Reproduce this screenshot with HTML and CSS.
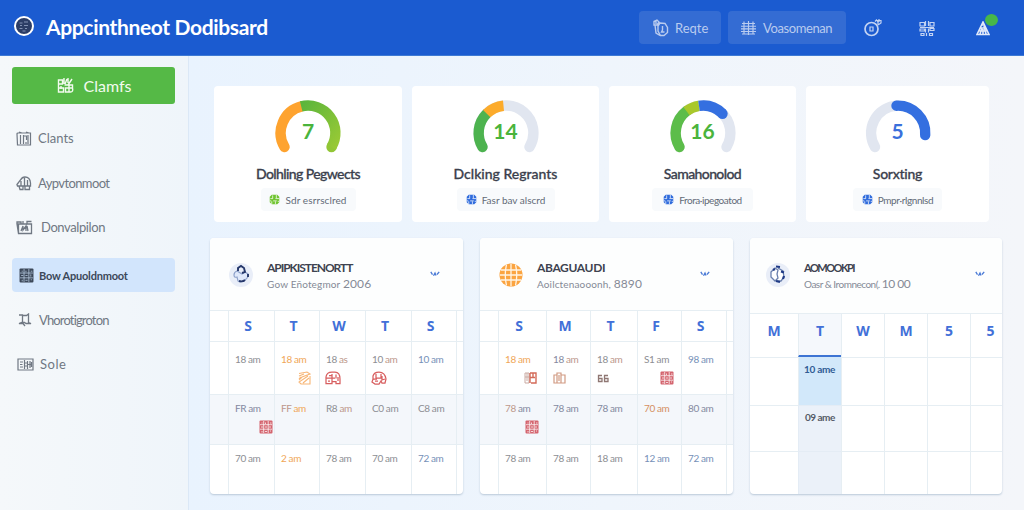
FILE: index.html
```html
<!DOCTYPE html>
<html lang="en">
<head>
<meta charset="utf-8">
<title>Appointment Dashboard</title>
<link rel="stylesheet" href="styles.css">
</head>
<body>
<svg class="defs" aria-hidden="true">
  <symbol id="block" viewBox="0 0 14 14"><rect x=".5" y=".5" width="13" height="13" rx="1" fill="currentColor"/><path d="M4.7 1v12M9.2 1v12M1 4.7h12M1 9.2h12M2.5 3h1M6.5 2.5v1.5M11 3h1.5M2 7h2M6 7h2M11 6v2M3 11v1.500M6 11.500h2M11 11h1" stroke="var(--hole,#fff)" stroke-width=".75" fill="none"/></symbol>
  <symbol id="bus" viewBox="0 0 16 14"><path d="M1 12.500V6Q1.500 1 7 1h3q5 0 5 7v4.500h-4v-2H7v2ZM1 7h9M4 4.500h3M7 3v7M11 3.500v4M13 6v4M3 10h2" stroke="currentColor" fill="none" stroke-width="1.250"/></symbol>
  <symbol id="dome" viewBox="0 0 16 14"><path d="M2 9V5Q3 1 8 1q6 0 7 7l-1 4h-3l-1-2-2 3H4L1 11l1-3h4M5 3v4h5V3M11 5v4l3-1M4 10h3" stroke="currentColor" fill="none" stroke-width="1.250"/></symbol>
  <symbol id="disc" viewBox="0 0 12 12"><path d="M3 .8h6l2.200 2.200v6L9 11.200H3L.8 9V3Z" fill="currentColor"/><path d="M4 1.500v3M8 1v3.500M1.500 5h3M7 5h4M4.500 7.500h4M3 8v3M7 8v3M1 7.500h1.500M9.500 8h1.500" stroke="#fff" stroke-width=".8"/></symbol>
  <symbol id="chev" viewBox="0 0 10 6"><path d="M.8.8l1.700 2.800M3.500 4.800l1.500-2.700 1 2.500M7 3.500L9.200.8" fill="none" stroke="#4a7ad6" stroke-width="1.300"/></symbol>
</svg>

<header class="topbar">
  <svg class="logo" viewBox="0 0 22 22"><circle cx="11" cy="11" r="9" fill="#2c3d66" stroke="#fff" stroke-width="2"/><path d="M6.500 8h3M11 7h4M7 10.500h2M11 10.500h4M6.500 13.500h3M12 13.500h2M9.500 16h3" stroke="#8292b4" stroke-width="1"/></svg>
  <h1>Appcinthneot Dodibsard</h1>
  <div class="tools">
    <button class="tool people"><svg width="17" height="18" viewBox="0 0 17 18"><path d="M2 2.500l3-1.500 2 2-2 3H2ZM3 6l1 8 4 2.500M8 4l5 .5 2.500 4v5L12 16.500H8.500L6 12V7ZM10.500 7v4l-1 2h3M4 2v3" fill="none" stroke="currentColor" stroke-width="1.400"/></svg><span>Reqte</span></button>
    <button class="tool views"><svg width="17" height="16" viewBox="0 0 17 16"><path d="M2 3.500h13M1 6.200h15M1 8.800h15M1 11.500h15M2 14h13M4 1.500v13M8.500 1v14M13 1.500v13" stroke="currentColor" stroke-width="1.150"/></svg><span>Voasomenan</span></button>
    <svg class="t1" width="20" height="20" viewBox="0 0 20 20"><circle cx="8.500" cy="11" r="6.500" fill="none" stroke="currentColor" stroke-width="1.700"/><path d="M7 9h3v4H7ZM12 3.500l1.500-1.500 1.500 2v3M14 2.500h4V5l-3 2M16 1v3" fill="none" stroke="currentColor" stroke-width="1.200"/></svg>
    <svg class="t2" width="16" height="18" viewBox="0 0 16 18"><path d="M1 3.500h4.500v3.500H1ZM6.500 2v5M9.500 2v5M11 3.500h4V7h-4ZM1 10h4.500v2H1ZM6.500 9.500v4M9.500 9.500v4M11 9.500h4v2h-4ZM2 14.500h3v2H2ZM7.500 14v3M10.500 14.500h3v2h-3ZM1 8.500h14" fill="none" stroke="currentColor" stroke-width="1.200"/></svg>
    <div class="alert"><svg width="14" height="15" viewBox="0 0 14 15"><path d="M7 1L1 13.500h12ZM6 4h3M4.500 7h5M3.500 10h7M6 6.500L4 13M8 5l2 8M7 8v6" fill="none" stroke="currentColor" stroke-width="1.600"/></svg><i></i></div>
  </div>
</header>

<div class="body">
  <aside>
    <button class="cta"><svg width="17" height="17" viewBox="0 0 17 17"><path d="M1.500 3h4v4h-4ZM1.500 7v8h5v-4h-5M7 1v6M10 2l-2 5M11 1v5M15 2l-4 6M7.500 8h8v3h-7v4h5q3 0 2-4M12 8v7M4 9v3" fill="none" stroke="currentColor" stroke-width="1.400"/></svg><span>Clamfs</span></button>
    <nav>
      <a class="n1"><svg width="16" height="15" viewBox="0 0 16 15"><path d="M1 3q0-1 1-1h12.500v12h-13ZM3 1l3 1M10 1l3 1M4.500 4v9M7.500 4v9M7.500 5h3v4M12 4v9M10 11v2" fill="none" stroke="currentColor" stroke-width="1.200"/></svg><span>Clants</span></a>
      <a class="n2"><svg width="16" height="15" viewBox="0 0 16 15"><path d="M1 8.500L4.500 4Q6 1 9 1q5 0 5.500 6v3h-13ZM5 5v5M8.500 2v8M11.500 4v6M3 10l1 3.500h3V10M9 10v3.500h4.500V10" fill="none" stroke="currentColor" stroke-width="1.300"/></svg><span>Aypvtonmoot</span></a>
      <a class="n3"><svg width="17" height="15" viewBox="0 0 17 15"><path d="M1 4h14.500v9.500h-13ZM1 4V2h4v2M11 4V1.500h4.500M7 1v3M2.500 4v9.500M5 11l2-5v4l3-4v5M11 6l1 5" fill="none" stroke="currentColor" stroke-width="1.300"/></svg><span>Donvalpilon</span></a>
      <a class="n4 active"><svg width="15" height="15" viewBox="0 0 14 14" style="--hole:#b5c8df"><use href="#block"/></svg><span>Bow Apuoldnmoot</span></a>
      <a class="n5"><svg width="14" height="14" viewBox="0 0 14 14"><path d="M1 2h3.500v7L1 10.500h4l2 2.500M4.500 2.500h4L10.500 1v8.500l2.500 1H8L6.500 9.500H4.500" fill="none" stroke="currentColor" stroke-width="1.300"/></svg><span>Vhorotigroton</span></a>
      <a class="n6"><svg width="17" height="13" viewBox="0 0 17 13"><path d="M1 1h15v11H1ZM3 4h3M3 6.500h2.500M3 9h3M7.500 2v9M7.500 5h3M7.500 8h3M10.500 3v8M10.500 6.500h4M13 3v7M14.500 4v5" fill="none" stroke="currentColor" stroke-width="1.200"/></svg><span>Sole</span></a>
    </nav>
  </aside>

  <main>
    <section class="stats">
      <article class="stat s1">
        <div class="gauge green"><svg viewBox="0 0 70 60"><defs><linearGradient id="g1" x1="0" y1="0" x2="1" y2="1"><stop stop-color="#5cb53c"/><stop offset="1" stop-color="#98c935"/></linearGradient></defs><path d="M11.500 49A27.400 27.400 0 0 1 28.500 8.400" stroke="#fea32f" stroke-linecap="round"/><path d="M58.500 49l0 0" stroke="#92c636" stroke-linecap="round"/><path d="M28.200 8.400A27.400 27.400 0 0 1 58.500 49" stroke="url(#g1)"/></svg><b>7</b></div>
        <h2>Dolhling Pegwects</h2>
        <div class="chip"><svg class="ci lime"><use href="#disc"/></svg><span>Sdr esrrsclred</span></div>
      </article>
      <article class="stat s2">
        <div class="gauge green"><svg viewBox="0 0 70 60"><path d="M11.500 49A27.400 27.400 0 1 1 58.500 49" stroke="#e1e6f0" stroke-linecap="round"/><path d="M11.500 49A27.400 27.400 0 0 1 15.700 15.600" stroke="#4db34f" stroke-linecap="round"/><path d="M15.700 15.600A27.400 27.400 0 0 1 32.500 7.700" stroke="#fcab2b"/></svg><b>14</b></div>
        <h2>Dclking Regrants</h2>
        <div class="chip"><svg class="ci blue"><use href="#disc"/></svg><span>Fasr bav alscrd</span></div>
      </article>
      <article class="stat s3">
        <div class="gauge green"><svg viewBox="0 0 70 60"><path d="M11.500 49A27.400 27.400 0 1 1 58.500 49" stroke="#e1e6f0" stroke-linecap="round"/><path d="M11.500 49A27.400 27.400 0 0 1 18.500 13.200" stroke="#5cbd4a" stroke-linecap="round"/><path d="M54.500 15.700l0 0" stroke="#346fe0" stroke-linecap="round"/><path d="M18.500 13.200A27.400 27.400 0 0 1 31 7.900" stroke="#a9c82b"/><path d="M31 7.900A27.400 27.400 0 0 1 54.500 15.700" stroke="#346fe0"/></svg><b>16</b></div>
        <h2>Samahonolod</h2>
        <div class="chip"><svg class="ci blue"><use href="#disc"/></svg><span>Frora·ipegoatod</span></div>
      </article>
      <article class="stat s4">
        <div class="gauge blue"><svg viewBox="0 0 70 60"><path d="M12 49A27.400 27.400 0 0 1 34 7.600" stroke="#e1e6f0" stroke-linecap="round"/><path d="M33.500 7.700A27.400 27.400 0 0 1 62.200 37" stroke="#346fe0" stroke-linecap="round"/></svg><b>5</b></div>
        <h2>Sorxting</h2>
        <div class="chip"><svg class="ci blue"><use href="#disc"/></svg><span>Pmpr·rlgnnlsd</span></div>
      </article>
    </section>

    <section class="calendars">
      <article class="cal c1">
        <div class="cal-head">
          <svg class="avatar" viewBox="0 0 24 24"><circle cx="12" cy="12" r="12" fill="#e9eef8"/><path d="M8 8q-3 1-3 4t3 2l1 4q3 2 7-1t3-6l-3-2-3 2Z" fill="#dfe8fa" stroke="#8fa2cb" stroke-width="1.200"/><path d="M9 8V5l3-2 3 2 1 4-3 1M10 18q4 1 6-1M19 11v3" fill="none" stroke="#26386b" stroke-width="1.900"/></svg>
          <div class="names"><h3>APIPKISTENORTT</h3><p>Gow Eñotegmor <em>2006</em></p></div>
          <svg class="chev"><use href="#chev"/></svg>
        </div>
        <div class="grid">
          <div class="day"></div><div class="day">S</div><div class="day">T</div><div class="day">W</div><div class="day">T</div><div class="day">S</div><div class="day"></div>
          <div></div><div class="gy">18 am</div>
          <div class="or">18 am<svg class="ic i1" viewBox="0 0 14 14"><path d="M2 2.500l8-1.500 3 2-8 3-3 3M13 5v8H4l-2-2 9-6M2 5l5-2M6 12l6-5M2 8l2-2" fill="none" stroke="#f8b676" stroke-width="1.100"/></svg></div>
          <div class="gy">18 <u class="br">as</u><svg class="ic i2 rd"><use href="#bus"/></svg></div>
          <div class="gy">10 <u class="br">am</u><svg class="ic i3 rd"><use href="#dome"/></svg></div>
          <div class="bl">10 am</div><div></div>
          <div class="alt"></div><div class="alt sl">FR am<svg class="ic i4 rs"><use href="#block"/></svg></div><div class="alt br">FF <u class="or">am</u></div><div class="alt gy">R8 <u class="br">am</u></div><div class="alt gy">C0 am</div><div class="alt gy">C8 am</div><div class="alt"></div>
          <div class="last"></div><div class="last gy">70 am</div><div class="last or">2 am</div><div class="last gy">78 am</div><div class="last gy">70 am</div><div class="last bl">72 am</div><div class="last"></div>
        </div>
      </article>

      <article class="cal c2">
        <div class="cal-head">
          <svg class="avatar" viewBox="0 0 24 24"><circle cx="12" cy="12" r="11.500" fill="#fba440"/><path d="M7.500 1.500Q5 12 7.500 22.500M12 1v22M16.500 1.500Q19 12 16.500 22.500M2 7h20M1 12h22M2 17h20" fill="none" stroke="#fff4e4" stroke-width="1.300"/></svg>
          <div class="names"><h3>ABAGUAUDI</h3><p>Aoilctenaooonh, <em>8890</em></p></div>
          <svg class="chev"><use href="#chev"/></svg>
        </div>
        <div class="grid">
          <div class="day"></div><div class="day">S</div><div class="day">M</div><div class="day">T</div><div class="day">F</div><div class="day">S</div><div class="day"></div>
          <div></div>
          <div class="or">18 am<svg class="ic j1" viewBox="0 0 13 12"><path d="M1 1h4v10H1ZM1 5h4M3 1v8" fill="none" stroke="#c9aaa2"/><path d="M6 1h6v10H7M6 1v10M6 5.500h5M9 1v5" fill="none" stroke="#d36a58" stroke-width="1.400"/></svg></div>
          <div class="sl">18 <u class="br">am</u><svg class="ic j2" viewBox="0 0 13 12"><path d="M1 3h3v8H1ZM4 3V1h4v10H4M8 3h4v8H8M6 3v6" fill="none" stroke="#d19a82" stroke-width="1.200"/></svg></div>
          <div class="gy">18 <u class="br">am</u><svg class="ic j3" viewBox="0 0 12 9"><path d="M5 1.500H1.500v6H5V4.500H2M11 1.500H7.500v6H11V4.500H8" fill="none" stroke="#8f7773" stroke-width="1.300"/></svg></div>
          <div class="gy">S1 am<svg class="ic j4 rs"><use href="#block"/></svg></div>
          <div class="bl">98 am</div><div></div>
          <div class="alt"></div><div class="alt br">78 <u class="sl">am</u><svg class="ic j5 rs"><use href="#block"/></svg></div><div class="alt sl">78 am</div><div class="alt sl">78 am</div><div class="alt do">70 am</div><div class="alt sl">80 am</div><div class="alt"></div>
          <div class="last"></div><div class="last gy">78 am</div><div class="last gy">78 am</div><div class="last gy">18 am</div><div class="last bl">12 am</div><div class="last bl">72 am</div><div class="last"></div>
        </div>
      </article>

      <article class="cal c3">
        <div class="cal-head">
          <svg class="avatar" viewBox="0 0 24 24"><circle cx="12" cy="12" r="12" fill="#e9eef8"/><path d="M5 9l4-4 3 2-1 4 1 4-3 3-4-4ZM12 5l5 3 1 6-3 4h-4" fill="#fff" stroke="#6b80ad" stroke-width="1.300"/><path d="M10 3.500l4 .5M15 8.500l3 1M7 7l2-1M18 13l-1 3M10 18l4 1" stroke="#1f3a86" stroke-width="2.200"/></svg>
          <div class="names"><h3>AOMOOKPI</h3><p>Oasr &amp; Iromnecon(. <em>10 00</em></p></div>
          <svg class="chev"><use href="#chev"/></svg>
        </div>
        <div class="grid">
          <div class="day">M</div><div class="day today">T</div><div class="day">W</div><div class="day">M</div><div class="day">5</div><div class="day end">5</div>
          <div></div><div class="pick">10 ame</div><div></div><div></div><div></div><div></div>
          <div></div><div class="tint">09 ame</div><div></div><div></div><div></div><div></div>
          <div></div><div class="tint"></div><div></div><div></div><div></div><div></div>
        </div>
      </article>
    </section>
  </main>
</div>
</body>
</html>
```
FILE: styles.css
```css
*{box-sizing:border-box}
body{margin:0;width:1024px;height:510px;overflow:hidden;font-family:Lato,"Open Sans",sans-serif;background:#f0f5fc}
h1,h2,h3,p{margin:0}
button{border:0;font:inherit;margin:0}
u{text-decoration:none}
.defs{display:none}

.topbar{display:flex;align-items:center;height:56px;padding-left:14px;background:#1b5bd0;border-bottom:1px solid #3e7ad4;color:#fff}
.logo{width:22px;height:22px;margin:0 0 3px -1px}
h1{margin:-2px 0 0 11px;font-size:21px;line-height:28px;font-weight:700;letter-spacing:-.35px;white-space:nowrap}
.tools{display:flex;align-items:center;margin-left:auto;color:#c3d3f3;height:56px}
.tool{display:flex;align-items:center;height:33px;border-radius:4px;background:#346cd3;color:#b9cbef;font-size:13px;padding:0 0 0 13px;gap:6px;white-space:nowrap}
.people{width:82px;margin-right:7px}
.views{width:118px;padding-left:12px;letter-spacing:-.4px}
.t1{margin-left:17px}
.t2{margin-left:36px}
.alert{position:relative;display:flex;margin:2px 34px 0 41px;color:#e2eafa}
.alert i{position:absolute;left:9px;top:-7px;width:13px;height:12px;border-radius:50%;background:#47b749}

.body{display:flex;height:454px}
aside{width:189px;padding:11px 12px;border-right:1px solid #dbe8f6;background:linear-gradient(90deg,#f5f8fa,#eff5fa)}
.cta{display:flex;align-items:center;justify-content:center;gap:10px;width:163px;height:37px;border-radius:3px;background:#55b946;color:#f3fbef;font-size:16px;padding:0 0 1px 1px}
nav{display:flex;flex-direction:column;padding-top:17px}
nav a{display:flex;align-items:center;height:34px;width:163px;padding-left:4px;gap:6px;border-radius:4px;color:#707883;font-size:13px;white-space:nowrap}
.n2{margin-top:11px;letter-spacing:-.6px}
.n3{margin-top:10px;letter-spacing:-.4px}
.n4{margin-top:14px;letter-spacing:-.2px}
.n5{margin-top:11px;letter-spacing:-.85px}
.n6{margin-top:10px;letter-spacing:.5px}
nav .n3{gap:8px}
nav .n5{padding-left:6px;gap:7px}
nav .n6{padding-left:5px}
nav .active{padding-left:7px;gap:5px;background:#d2e5fc;color:#3c4859;font-size:11px;font-weight:700}

main{flex:1;padding:30px 22px 0 21px;background:linear-gradient(90deg,#e9f3fe,#eff5fc 50%,#f4f6fa)}
.stats{display:flex;gap:10px;padding-left:4px}
.stat{display:flex;flex-direction:column;align-items:center;width:187px;height:136px;padding-top:12px;border-radius:4px;background:#fff}
.s1{width:188px}.s4{width:183px}
.gauge{position:relative;width:70px;height:60px}
.gauge svg{display:block;width:70px;height:60px}
.gauge path{fill:none;stroke-width:10.400}
.gauge b{position:absolute;inset:21px 0 auto 0;text-align:center;font:700 21px/24px Lato,sans-serif}
.green b{color:#4ab43c}
.blue b{color:#3a70dc}
h2{margin-top:7px;font-size:14px;line-height:18px;font-weight:500;color:#3b3f4d;white-space:nowrap;letter-spacing:-.6px;-webkit-text-stroke:.3px}
.s2 h2{letter-spacing:0}
.s4 h2{letter-spacing:-.25px}
.chip{display:flex;align-items:center;justify-content:center;gap:5px;width:95px;height:23px;margin-top:5px;border-radius:4px;background:#f8fafc;color:#626a77;font-size:10px;white-space:nowrap}
.s1 .chip{letter-spacing:.1px}
.s2 .chip{width:98px}
.s3 .chip{width:101px;letter-spacing:-.45px}
.s4 .chip{width:89px;letter-spacing:-.4px}
.ci{width:11px;height:11px}
.ci.lime{color:#70c431}.ci.blue{color:#2f6bdc}

.calendars{display:flex;gap:17px;padding-top:16px}
.cal{width:253px;height:256px;border-radius:4px;overflow:hidden;background:#fff;box-shadow:0 1px 2px #b9c8d8}
.c3{width:252px}
.cal-head{display:flex;height:72px;padding:0 23px 0 19px;background:#fdfefe}
.c3 .cal-head{height:75px;padding:0 17px 0 16px}
.avatar{width:24px;height:24px;margin-top:25px}
.names{margin:21px 0 0 14px;flex:1;white-space:nowrap}
h3{font-size:12px;line-height:17px;font-weight:700;color:#3e4350;letter-spacing:-1.05px}
.c2 h3{letter-spacing:-.35px}
.c3 h3{font-size:11px;letter-spacing:-1.5px}
.names p{font-size:10px;line-height:16px;color:#858a96;letter-spacing:.15px}
.c3 .names p{letter-spacing:-.5px}
.names em{font-style:normal;font-size:12px}
.chev{width:10px;height:6px;margin-top:33px}
.grid{display:grid;grid-template-columns:18px 46px 45px 46px 46px 45px 7px;grid-template-rows:31px 53px 50px 50px;font-size:10px;line-height:12px;letter-spacing:-.4px}
.c2 .grid{grid-template-columns:18px 48px 44px 47px 44px 45px 7px}
.c3 .grid{grid-template-columns:48px 43px 43px 43px 43px 32px;grid-template-rows:44px 48px 46px 43px}
.grid>div{position:relative;border-top:1px solid #e6eef3;border-left:1px solid #e6eef3;padding:11px 0 0 6px;white-space:nowrap;overflow:hidden}
.c1 .grid>div:nth-child(7n+1),.c2 .grid>div:nth-child(7n+1),.c3 .grid>div:nth-child(6n+1){border-left:0}
.grid>.alt{background:#f4f7fb;padding-top:7px}
.grid>.last{padding-top:7px}
.grid>.day{display:flex;align-items:center;justify-content:center;padding:0 7px 0 0;color:#4270d8;font:700 14px/16px "Open Sans",sans-serif;letter-spacing:0}
.c3 .grid>.day{padding:0 0 10px}
.c3 .grid>.end{padding-left:8px}
.c3 .grid>.today{background:#f5f8fc;border-bottom:2px solid #3d74d3;padding-bottom:8px}
.c3 .grid>.pick{background:#d2e8fa;border-top:0;padding:6px 0 0 5px;color:#2f5c94;font-weight:700;letter-spacing:-.3px}
.c3 .grid>.tint{background:#ebf1f9;padding:5px 0 0 6px;color:#555c68;font-weight:700;letter-spacing:-.5px;border-color:#e4ecf5}
.gy{color:#8d8e93}.or{color:#f0a657}.br{color:#bd978b}.bl{color:#7690b8}.sl{color:#8489a0}.do{color:#d58f62}
.ic{display:block;width:14px;height:14px;margin-top:6px}
.rd{color:#d85f60}
.rs{color:#d4656f}
.i1{margin-left:16px}.i2,.i3{width:16px;margin-left:-1px}
.i4{margin-left:24px}
.j1{width:13px;height:12px;margin:7px 0 0 19px}
.j2{width:13px;height:12px;margin:7px 0 0 0}
.j3{width:12px;height:9px;margin:9px 0 0 0}
.j4{margin-left:16px}.j5{margin-left:20px}
```
